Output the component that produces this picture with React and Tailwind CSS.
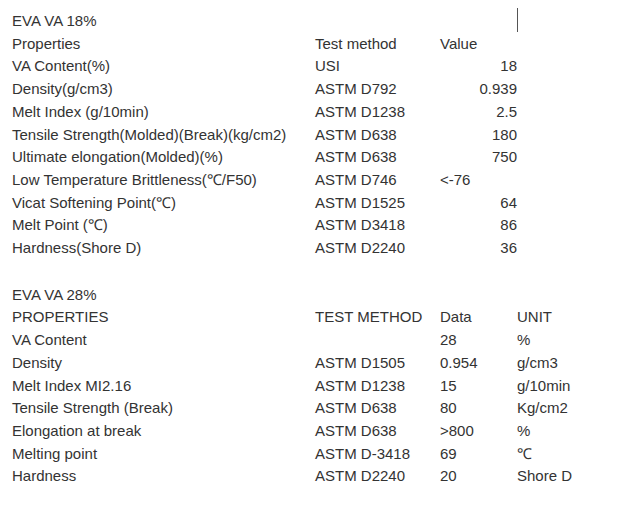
export default function App() {
  const t1 = [
    ["VA Content(%)", "USI", "18", true],
    ["Density(g/cm3)", "ASTM D792", "0.939", true],
    ["Melt Index (g/10min)", "ASTM D1238", "2.5", true],
    ["Tensile Strength(Molded)(Break)(kg/cm2)", "ASTM D638", "180", true],
    ["Ultimate elongation(Molded)(%)", "ASTM D638", "750", true],
    ["Low Temperature Brittleness(\u2103/F50)", "ASTM D746", "<-76", false],
    ["Vicat Softening Point(\u2103)", "ASTM D1525", "64", true],
    ["Melt Point (\u2103)", "ASTM D3418", "86", true],
    ["Hardness(Shore D)", "ASTM D2240", "36", true],
  ];
  const t2 = [
    ["VA Content", "", "28", "%"],
    ["Density", "ASTM D1505", "0.954", "g/cm3"],
    ["Melt Index MI2.16", "ASTM D1238", "15", "g/10min"],
    ["Tensile Strength (Break)", "ASTM D638", "80", "Kg/cm2"],
    ["Elongation at break", "ASTM D638", ">800", "%"],
    ["Melting point", "ASTM D-3418", "69", "\u2103"],
    ["Hardness", "ASTM D2240", "20", "Shore D"],
  ];
  return (
    <div className="relative w-[633px] h-[505px] bg-white text-[#333] text-[15px] leading-[22.7px] font-['Liberation_Sans',Arial,sans-serif] pl-[12px] pt-[10px]">
      <div className="absolute left-[517px] top-[8px] w-px h-[24px] bg-[#555]" />
      <div className="grid grid-cols-[303px_125px_77px]">
        <div className="col-span-3">EVA VA 18%</div>
        <div>Properties</div>
        <div>Test method</div>
        <div>Value</div>
        {t1.map(([a, b, c, r], i) => (
          <div key={i} className="contents">
            <div className="whitespace-nowrap">{a}</div>
            <div>{b}</div>
            <div className={r ? "text-right" : ""}>{c}</div>
          </div>
        ))}
      </div>
      <div className="h-[24px]" />
      <div className="grid grid-cols-[303px_125px_77px_1fr]">
        <div className="col-span-4">EVA VA 28%</div>
        <div>PROPERTIES</div>
        <div>TEST METHOD</div>
        <div>Data</div>
        <div>UNIT</div>
        {t2.map(([a, b, c, d], i) => (
          <div key={i} className="contents">
            <div>{a}</div>
            <div>{b}</div>
            <div>{c}</div>
            <div>{d}</div>
          </div>
        ))}
      </div>
    </div>
  );
}
